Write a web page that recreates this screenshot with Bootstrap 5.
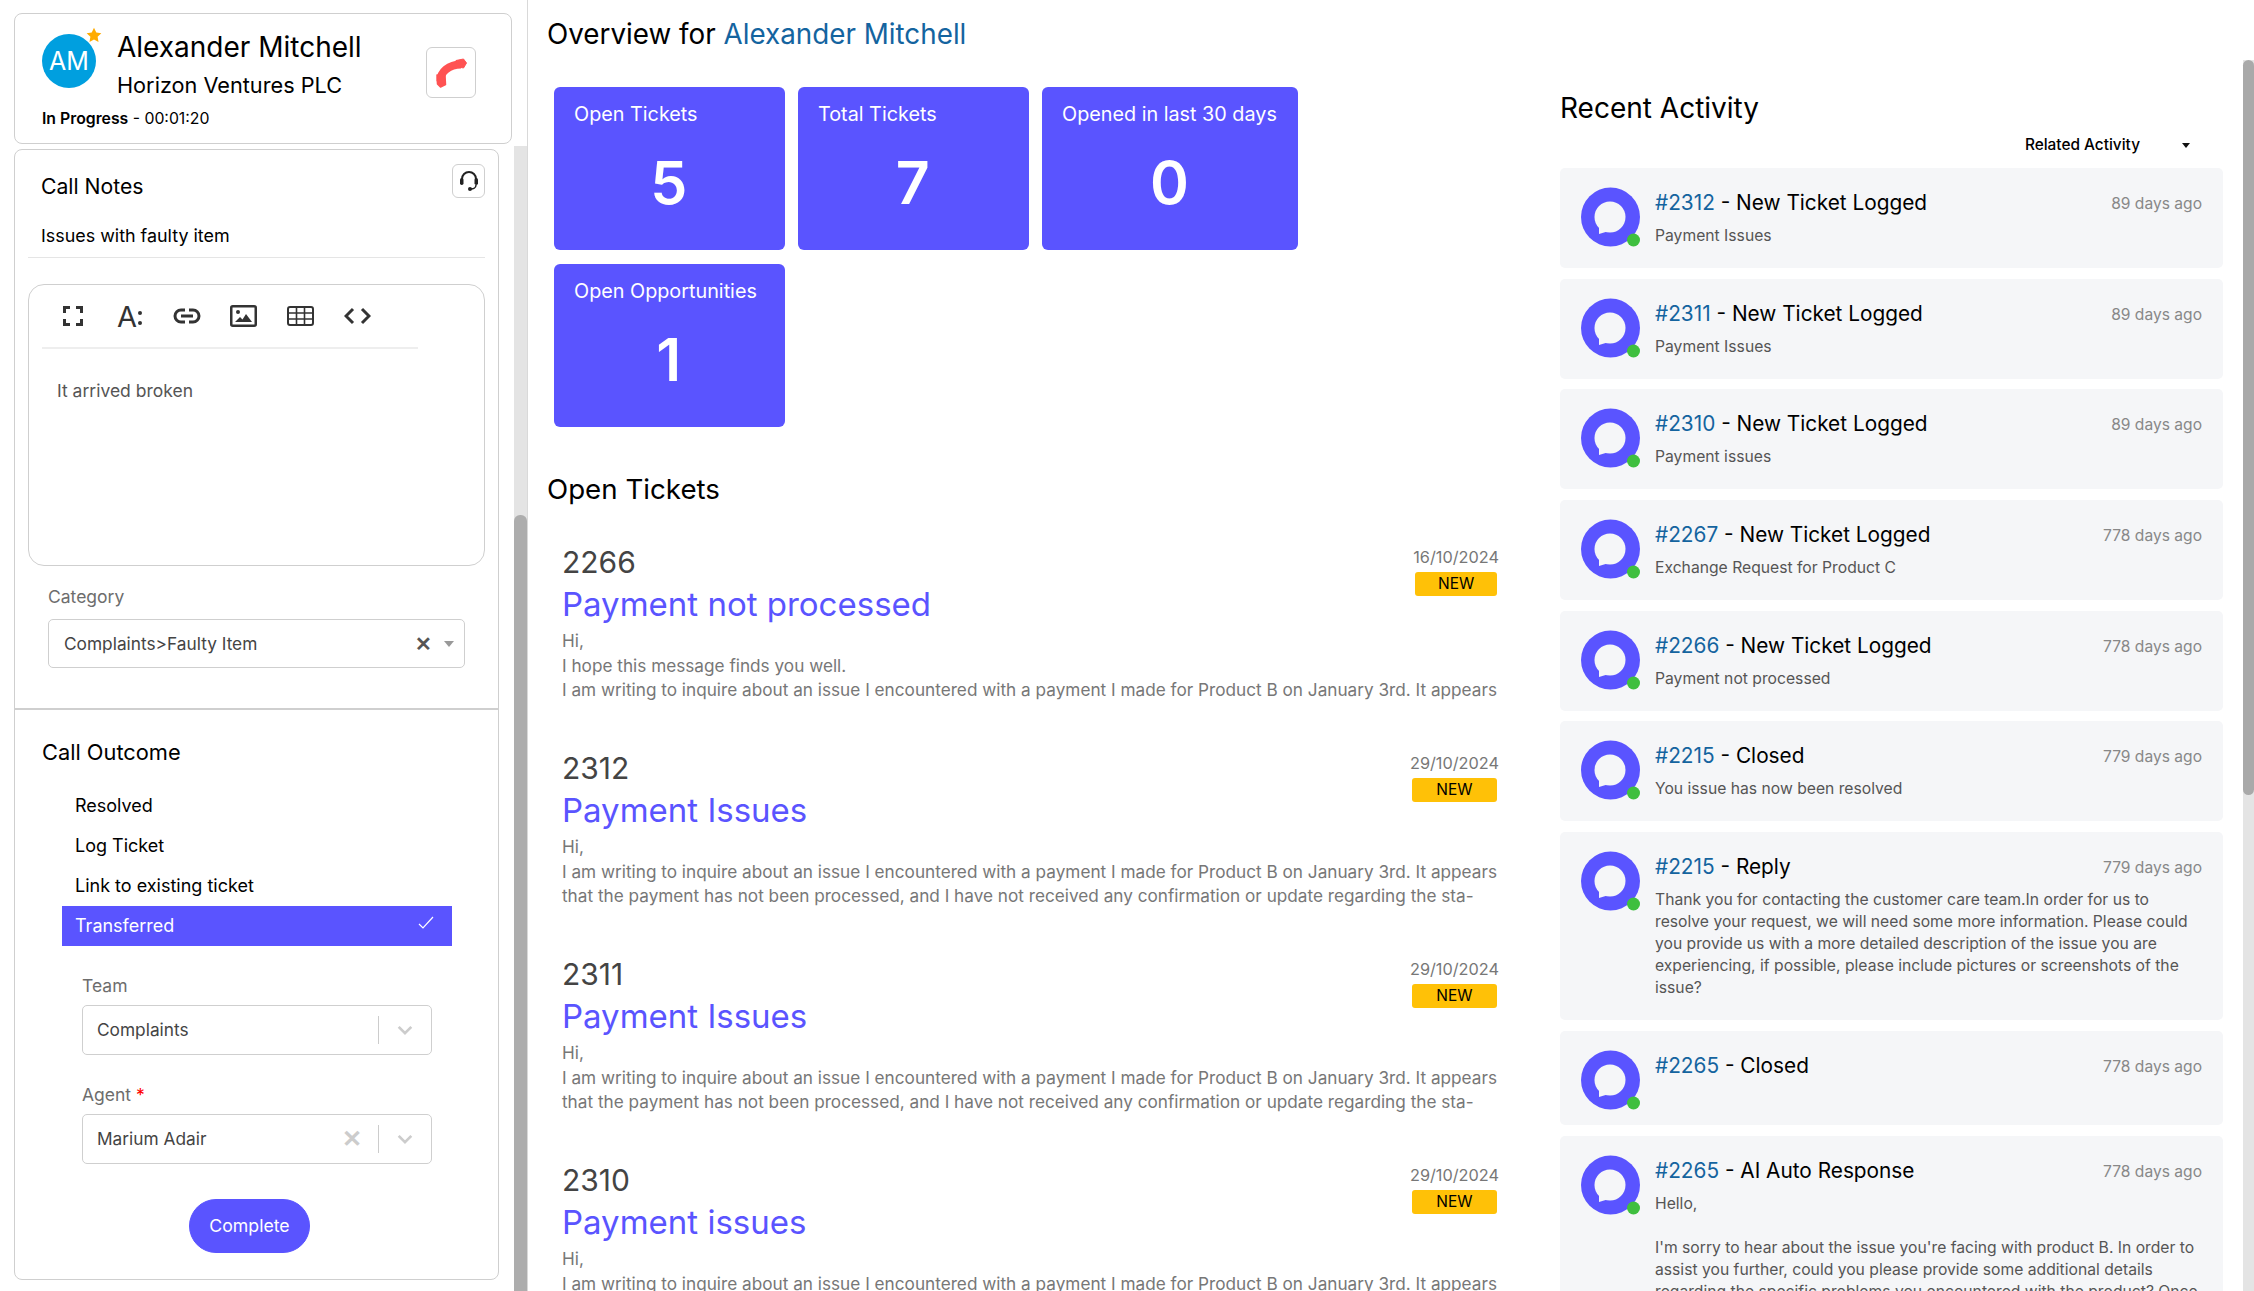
<!DOCTYPE html>
<html lang="en">
<head>
    <meta charset="UTF-8">
    <meta name="viewport" content="width=device-width, initial-scale=1">
    <title>Call Overview</title>
    <link href="https://cdn.jsdelivr.net/npm/bootstrap@5.3.0/dist/css/bootstrap.min.css" rel="stylesheet">
    <style>
        :root { --brand: #5a54ff; --line: #cfcfcf; --blue: #14649f; }
        html, body { height: 100%; }
        body { font-family: Inter, "Noto Sans", sans-serif; color: #000; overflow: hidden; background: #fff; }

        /* left pane */
        .left-pane { width: 528px; flex: none; border-right: 1px solid #d9d9d9; padding-left: 14px; }
        .contact-box { width: 498px; height: 131px; margin-top: 13px; margin-bottom: 2px; border: 1px solid var(--line); border-radius: 8px; padding: 16px 35px 0 27px; }
        .am-avatar { width: 54px; height: 54px; margin-top: 4px; flex: none; border-radius: 50%; background: #009fdf; color: #fff; font-size: 25px; line-height: 54px; text-align: center; }
        .am-star { position: absolute; top: -7px; right: -6px; }
        .contact-info { margin-left: 21px; }
        .contact-name { font-size: 28px; line-height: 34px; }
        .contact-org { font-size: 21.7px; line-height: 34px; margin-top: 4px; }
        .contact-status { font-size: 15.8px; line-height: 20px; margin-top: 7px; }
        .hangup-btn { width: 50px; height: 51px; margin-top: 17px; border: 1px solid var(--line); border-radius: 6px; }
        .left-row { height: 1145px; }
        .work-card { width: 485px; height: 1131px; margin-top: 3px; border: 1px solid var(--line); border-radius: 8px; padding: 0; }
        .bar-track { width: 13px; margin-left: 15px; background: #e4e4e4; }
        .bar-thumb { background: #adadad; border-radius: 6px 6px 0 0; }
        .bar-thumb-left { height: 776px; margin-top: 369px; }
        .notes-part { height: 558px; padding: 14px 13px 0 13px; }
        .notes-title { font-size: 21.2px; line-height: 30px; padding: 7px 0 0 13px; }
        .square-btn { width: 33px; height: 34px; border: 1px solid var(--line); border-radius: 6px; }
        .notes-subject { font-size: 17.9px; line-height: 24px; padding: 11px 13px 9px; border-bottom: 1px solid #e5e5e5; margin-top: 12px; }
        .editor-box { height: 282px; margin-top: 26px; border: 1px solid var(--line); border-radius: 16px; padding: 0 13px; }
        .editor-tools { width: 376px; height: 64px; padding: 0 2px; gap: 0; border-bottom: 2px solid #eee; }
        .tool-slot { width: 57px; display: flex; justify-content: center; }
        .editor-text { font-size: 17.5px; line-height: 24px; color: #555; padding: 30px 15px 0; }
        .field-label { font-size: 17.5px; line-height: 22px; color: #6d6d6d; margin: 0; }
        .field-box { border: 1px solid var(--line); border-radius: 5px; font-size: 17.3px; color: #444; }
        .cat-field { padding: 20px 20px 0; }
        .cat-field .field-box { height: 49px; margin-top: 11px; padding: 0 10px 0 15px; }
        .x-mark { font-size: 20px; line-height: 1; color: #555; font-weight: 700; }
        .caret-mark { width: 0; height: 0; border-left: 5px solid transparent; border-right: 5px solid transparent; border-top: 6px solid #999; margin-left: 12px; }
        .outcome-part { border-top: 2px solid var(--line); padding: 27px 0 0 0; }
        .outcome-title { font-size: 21.8px; line-height: 30px; padding-left: 27px; margin: 0; }
        .outcome-list { width: 390px; margin: 19px 0 0 47px; border-radius: 0; }
        .outcome-list .list-group-item { height: 40px; padding: 0 13px; border: 0; background: transparent; color: #000; font-size: 18px; line-height: 40px; }
        .outcome-list .list-group-item.active { background: var(--brand); color: #fff; margin-top: 0; }
        .check-mark { margin-right: 5px; margin-top: -8px; }
        .transfer-fields { padding: 29px 0 0 67px; width: 417px; }
        .transfer-fields .field-box { height: 50px; margin: 8px 0 29px; padding-left: 14px; }
        .req-mark { color: #f00; }
        .sel-div { width: 1px; height: 28px; background: #ccc; margin: 0 17px 0 0; }
        .sel-x { color: #ccc; font-size: 24px; margin-right: 16px; line-height: 1; font-weight: 700; }
        .sel-chev { margin-right: 17px; }
        .complete-wrap { padding-left: 174px; }
        .complete-btn { --bs-btn-bg: var(--brand); --bs-btn-border-color: var(--brand); --bs-btn-color: #fff; width: 121px; height: 54px; font-size: 17.7px; padding: 0; margin-top: 6px; }

        /* middle column */
        .mid-col { width: 1013px; flex: none; padding-left: 19px; }
        .overview-h { font-size: 27.8px; line-height: 40px; margin: 14px 0 0; font-weight: 400; }
        .overview-h a, .act-title a { color: var(--blue); text-decoration: none; }
        .tile-grid { width: 760px; margin: 33px 0 0 7px; gap: 14px 13.5px; }
        .tile-box { min-width: 230.5px; height: 163px; background: var(--brand); color: #fff; border-radius: 6px; padding: 15px 21px 0 20px; }
        .tile-label { font-size: 19.8px; line-height: 24px; white-space: nowrap; }
        .tile-num { font-size: 59px; line-height: 70px; font-weight: 600; margin-top: 22px; text-align: center; }
        .section-h { font-size: 27.7px; line-height: 40px; margin: 42px 0 33px; font-weight: 400; }
        .ticket-item { width: 937px; margin: 0 0 45.5px 15px; }
        .ticket-no { font-size: 30px; line-height: 40px; color: #444; }
        .ticket-title { font-size: 33px; line-height: 44px; color: var(--brand); text-decoration: none; display: block; }
        .ticket-body { margin-top: 3px; }
        .ticket-line { font-size: 17.2px; line-height: 24.5px; color: #777; white-space: nowrap; }
        .ticket-date { font-size: 16.3px; line-height: 22px; color: #777; margin-top: 4px; }
        .ticket-state { background: #ffc107; color: #000; font-size: 15.5px; line-height: 24px; height: 24px; padding: 0; border-radius: 3px; margin: 4px 2px 0; font-weight: 400; }

        /* right column */
        .right-col { width: 663px; flex: none; margin-left: 19px; }
        .recent-h { font-size: 28px; line-height: 40px; margin: 88px 0 0; font-weight: 400; }
        .related-row { height: 24px; margin: 5px 0 11px; padding-right: 33px; font-size: 15.4px; font-weight: 500; line-height: 24px; }
        .related-caret { width: 0; height: 0; border-left: 4px solid transparent; border-right: 4px solid transparent; border-top: 5px solid #111; margin-left: 42px; }
        .act-card { background: #f5f6f8; border: 0; border-radius: 5px; padding: 19px 21px 21px; margin-bottom: 10.7px; }
        .act-card.act-short { padding-bottom: 15px; }
        .chat-face { width: 60px; height: 60px; flex: none; margin-right: 14px; }
        .act-title { font-size: 20.8px; line-height: 32px; }
        .act-age { font-size: 15.6px; line-height: 31px; padding-top: 1px; color: #888; white-space: nowrap; }
        .act-text { font-size: 15.7px; line-height: 22px; color: #555; margin-top: 6px; }
        .main-track { width: 11px; margin: 60px 0 0 20px; background: #e4e4e4; }
        .bar-thumb-main { height: 735px; background: #a9a9a9; border-radius: 6px; }
    </style>
</head>
<body class="d-flex">

<svg width="0" height="0" class="position-absolute">
    <symbol id="chat-icon" viewBox="0 0 60 60">
        <circle cx="29.5" cy="30" r="29.5" fill="#5a54ff"/>
        <circle cx="29" cy="30" r="15.5" fill="#f5f6f8"/>
        <path d="M18 37v10l10-3z" fill="#f5f6f8"/>
        <circle cx="52.5" cy="53" r="6.5" fill="#3fbf3f"/>
    </symbol>
    <symbol id="chev-icon" viewBox="0 0 20 12">
        <path d="M3 2l7 7 7-7" fill="none" stroke="#ccc" stroke-width="3"/>
    </symbol>
</svg>

<aside class="left-pane">
    <div class="contact-box">
        <div class="d-flex">
            <div class="position-relative am-avatar">AM
                <svg class="am-star" width="16" height="16" viewBox="0 0 24 24"><path d="M12 1l3.4 7.2 7.6 1-5.600 5.400 1.400 7.800-6.800-3.800-6.800 3.800 1.400-7.800L1 9.200l7.600-1z" fill="#ffab00"/></svg>
            </div>
            <div class="flex-grow-1 contact-info">
                <div class="contact-name">Alexander Mitchell</div>
                <div class="contact-org">Horizon Ventures PLC</div>
            </div>
            <div class="hangup-btn d-flex align-items-center justify-content-center">
                <svg width="32" height="30" viewBox="0 0 32 30">
                    <path d="M5.500 23C5 14 14 6.500 26 6.500" fill="none" stroke="#ff5252" stroke-width="8"/>
                    <path d="M2 17l.5 9 3 3 5-2.500-.5-9z" fill="#ff5252" stroke="#ff5252" stroke-width="1.500" stroke-linejoin="round"/>
                    <path d="M21 2.500l7.500-1.500 3 4-3 5-7-1.500z" fill="#ff5252" stroke="#ff5252" stroke-width="1" stroke-linejoin="round"/>
                </svg>
            </div>
        </div>
        <div class="contact-status"><span class="fw-semibold">In Progress</span> - 00:01:20</div>
    </div>

    <div class="d-flex left-row">
        <div class="card work-card">
            <div class="notes-part">
                <div class="d-flex justify-content-between">
                    <div class="notes-title">Call Notes</div>
                    <div class="square-btn d-flex align-items-center justify-content-center">
                        <svg width="20" height="22" viewBox="0 0 20 22" fill="none">
                            <path d="M3 11V9a7 7 0 0 1 14 0v2" stroke="#222" stroke-width="2"/>
                            <rect x="1" y="8" width="3.500" height="7" rx="1.700" fill="#222"/>
                            <rect x="15.500" y="8" width="3.500" height="7" rx="1.700" fill="#222"/>
                            <path d="M17 15c0 3-3 4-5 4" stroke="#222" stroke-width="1.500"/>
                            <circle cx="11" cy="19" r="2" fill="#222"/>
                        </svg>
                    </div>
                </div>
                <div class="notes-subject">Issues with faulty item</div>
                <div class="editor-box">
                    <div class="editor-tools d-flex align-items-center">
                        <span class="tool-slot">
                            <svg width="20" height="20" viewBox="0 0 20 20" fill="none" stroke="#333" stroke-width="3"><path d="M1.500 7V1.500H7M13 1.500h5.500V7M18.500 13v5.500H13M7 18.500H1.500V13"/></svg>
                        </span>
                        <span class="tool-slot">
                            <svg width="25" height="34" viewBox="0 0 25 34"><text x="0" y="28" font-family="Inter, sans-serif" font-size="29" fill="#333">A</text><circle cx="23" cy="14" r="2" fill="#333"/><circle cx="23" cy="24" r="2" fill="#333"/></svg>
                        </span>
                        <span class="tool-slot">
                            <svg width="28" height="16" viewBox="0 0 28 16" fill="none" stroke="#333" stroke-width="3"><path d="M12 2H8a6 6 0 0 0 0 12h4M16 2h4a6 6 0 0 1 0 12h-4M8 8h12"/></svg>
                        </span>
                        <span class="tool-slot">
                            <svg width="27" height="22" viewBox="0 0 27 22"><rect x="1.250" y="1.250" width="24.500" height="19.500" rx="1.500" fill="none" stroke="#333" stroke-width="2.500"/><circle cx="8" cy="7" r="2" fill="#333"/><path d="M5 17l5-5 2.500 2.500L16 9l6 8z" fill="#333"/></svg>
                        </span>
                        <span class="tool-slot">
                            <svg width="27" height="20" viewBox="0 0 27 20" fill="none" stroke="#333"><rect x="1" y="1" width="25" height="18" rx="2" stroke-width="2"/><path d="M1 7h25M1 13h25M9.500 1v18M17.500 1v18" stroke-width="1.600"/></svg>
                        </span>
                        <span class="tool-slot">
                            <svg width="27" height="18" viewBox="0 0 27 18" fill="none" stroke="#333" stroke-width="3"><path d="M9 2L2 9l7 7M18 2l7 7-7 7"/></svg>
                        </span>
                    </div>
                    <div class="editor-text">It arrived broken</div>
                </div>
                <div class="cat-field">
                    <label class="field-label d-block">Category</label>
                    <div class="field-box d-flex align-items-center">
                        <span class="flex-grow-1">Complaints&gt;Faulty Item</span>
                        <span class="x-mark">&#x2715;</span>
                        <span class="caret-mark"></span>
                    </div>
                </div>
            </div>

            <div class="outcome-part">
                <h5 class="outcome-title fw-normal">Call Outcome</h5>
                <div class="list-group outcome-list">
                    <div class="list-group-item">Resolved</div>
                    <div class="list-group-item">Log Ticket</div>
                    <div class="list-group-item">Link to existing ticket</div>
                    <div class="list-group-item active d-flex justify-content-between align-items-center">Transferred
                        <svg class="check-mark" width="16" height="13" viewBox="0 0 16 13" fill="none" stroke="#fff" stroke-width="1.200"><path d="M1 8l4 4L15 1"/></svg>
                    </div>
                </div>
                <div class="transfer-fields">
                    <label class="field-label d-block">Team</label>
                    <div class="field-box d-flex align-items-center">
                        <span class="flex-grow-1">Complaints</span>
                        <span class="sel-div"></span>
                        <svg class="sel-chev" width="18" height="11"><use href="#chev-icon"/></svg>
                    </div>
                    <label class="field-label d-block">Agent <span class="req-mark">*</span></label>
                    <div class="field-box d-flex align-items-center">
                        <span class="flex-grow-1">Marium Adair</span>
                        <span class="sel-x">&#x2715;</span>
                        <span class="sel-div"></span>
                        <svg class="sel-chev" width="18" height="11"><use href="#chev-icon"/></svg>
                    </div>
                </div>
                <div class="d-flex complete-wrap">
                    <button type="button" class="btn rounded-pill complete-btn">Complete</button>
                </div>
            </div>
        </div>
        <div class="bar-track"><div class="bar-thumb bar-thumb-left"></div></div>
    </div>
</aside>

<main class="mid-col">
    <h4 class="overview-h">Overview for <a href="#">Alexander Mitchell</a></h4>
    <div id="tileGrid" class="d-flex flex-wrap tile-grid"></div>
    <h4 class="section-h">Open Tickets</h4>
    <div id="ticketList"></div>
</main>

<section class="right-col">
    <h4 class="recent-h">Recent Activity</h4>
    <div class="related-row d-flex justify-content-end align-items-center">Related Activity<span class="related-caret"></span></div>
    <div id="activityList"></div>
</section>

<div class="main-track"><div class="bar-thumb-main"></div></div>

<script>
    const tiles = [
        ["Open Tickets", 5], ["Total Tickets", 7], ["Opened in last 30 days", 0], ["Open Opportunities", 1]
    ];
    const body1 = "I am writing to inquire about an issue I encountered with a payment I made for Product B on January 3rd. It appears";
    const body2 = "that the payment has not been processed, and I have not received any confirmation or update regarding the sta-";
    const tickets = [
        { no: 2266, date: "16/10/2024", title: "Payment not processed", lines: ["Hi,", "I hope this message finds you well.", body1] },
        { no: 2312, date: "29/10/2024", title: "Payment Issues", lines: ["Hi,", body1, body2] },
        { no: 2311, date: "29/10/2024", title: "Payment Issues", lines: ["Hi,", body1, body2] },
        { no: 2310, date: "29/10/2024", title: "Payment issues", lines: ["Hi,", body1, body2] }
    ];
    const activity = [
        { id: 2312, what: "New Ticket Logged", age: 89, text: "Payment Issues" },
        { id: 2311, what: "New Ticket Logged", age: 89, text: "Payment Issues" },
        { id: 2310, what: "New Ticket Logged", age: 89, text: "Payment issues" },
        { id: 2267, what: "New Ticket Logged", age: 778, text: "Exchange Request for Product C" },
        { id: 2266, what: "New Ticket Logged", age: 778, text: "Payment not processed" },
        { id: 2215, what: "Closed", age: 779, text: "You issue has now been resolved" },
        { id: 2215, what: "Reply", age: 779, text: "Thank you for contacting the customer care team.In order for us to resolve your request, we will need some more information. Please could you provide us with a more detailed description of the issue you are experiencing, if possible, please include pictures or screenshots of the issue?" },
        { id: 2265, what: "Closed", age: 778, text: "", short: true },
        { id: 2265, what: "AI Auto Response", age: 778, text: "Hello,<br><br>I'm sorry to hear about the issue you're facing with product B. In order to assist you further, could you please provide some additional details regarding the specific problems you encountered with the product? Once" }
    ];

    document.getElementById("tileGrid").innerHTML = tiles.map(t => `
        <div class="tile-box">
            <div class="tile-label">${t[0]}</div>
            <div class="tile-num">${t[1]}</div>
        </div>`).join("");

    document.getElementById("ticketList").innerHTML = tickets.map(t => `
        <div class="ticket-item">
            <div class="d-flex justify-content-between">
                <div>
                    <div class="ticket-no">${t.no}</div>
                    <a href="#" class="ticket-title">${t.title}</a>
                </div>
                <div class="d-flex flex-column align-self-start">
                    <div class="ticket-date">${t.date}</div>
                    <span class="badge ticket-state">NEW</span>
                </div>
            </div>
            <div class="ticket-body">
                ${t.lines.map(l => `<div class="ticket-line">${l}</div>`).join("")}
            </div>
        </div>`).join("");

    document.getElementById("activityList").innerHTML = activity.map(a => `
        <div class="card act-card d-flex flex-row${a.short ? " act-short" : ""}">
            <svg class="chat-face"><use href="#chat-icon"/></svg>
            <div class="flex-grow-1">
                <div class="d-flex justify-content-between">
                    <div class="act-title"><a href="#">#${a.id}</a> - ${a.what}</div>
                    <div class="act-age">${a.age} days ago</div>
                </div>
                ${a.text ? `<div class="act-text">${a.text}</div>` : ""}
            </div>
        </div>`).join("");
</script>

<script src="https://cdn.jsdelivr.net/npm/bootstrap@5.3.0/dist/js/bootstrap.bundle.min.js"></script>
</body>
</html>
